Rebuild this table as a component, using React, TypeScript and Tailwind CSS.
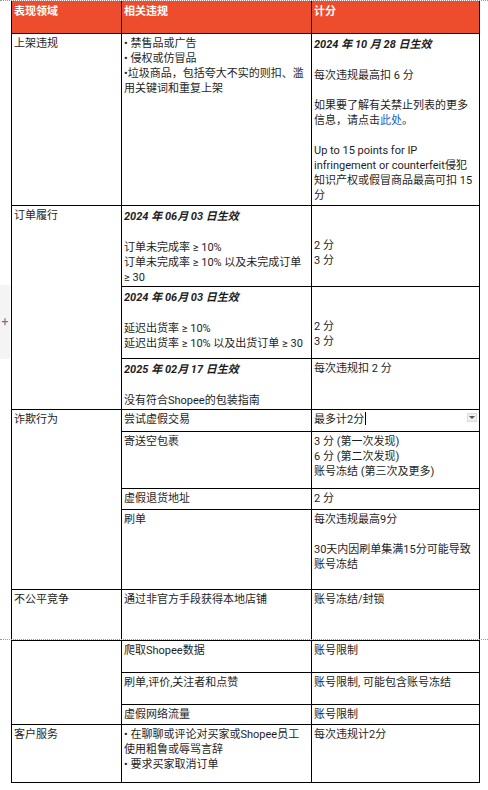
import React from 'react';

const cell = 'border-r border-b border-black px-[2px] pt-[2px] overflow-hidden';
const head = 'border-r border-b border-black bg-[#ee4d2d] px-[2px] pt-[3px] font-bold text-white';

function Dated({ children }: { children: React.ReactNode }) {
	return <div className="whitespace-nowrap font-bold italic leading-[17px]">{children}</div>;
}

function Gap({ h = 'h-[15px]' }: { h?: string }) {
	return <div className={h} />;
}

function Line({ children }: { children: React.ReactNode }) {
	return <div className="whitespace-nowrap">{children}</div>;
}

export default function App() {
	return (
		<div
			className="relative min-h-[790px] w-[488px] bg-white text-[11px] leading-[15px] text-[#1e1e1e]"
			style={{ fontFamily: 'Roboto, "Noto Sans CJK SC", sans-serif' }}
		>
			{/* page margin widget */}
			<div className="absolute left-0 top-[285px] flex h-[74px] w-[10px] items-center justify-center bg-[#f4f4f4] text-[12px] text-gray-500">
				+
			</div>

			<div className="h-px border-t border-dotted border-[#9a9a9a]" />

			<div className="ml-[11px] grid w-[469px] grid-cols-[110px_190px_168px] grid-rows-[33px_172px_81px_72px_51px_22px_57px_21px_80px_49px] border-l border-black">
				<div className={head}>表现领域</div>
				<div className={head}>相关违规</div>
				<div className={head}>计分</div>

				{/* 上架违规 */}
				<div className={cell}>上架违规</div>
				<div className={cell}>
					<Line>• 禁售品或广告</Line>
					<Line>• 侵权或仿冒品</Line>
					<Line>•垃圾商品，包括夸大不实的则扣、滥</Line>
					<Line>用关键词和重复上架</Line>
				</div>
				<div className={cell}>
					<Dated>2024 年 10 月 28 日生效</Dated>
					<Gap />
					<Line>每次违规最高扣 6 分</Line>
					<Gap />
					<Line>如果要了解有关禁止列表的更多</Line>
					<Line>
						信息，请点击<span className="text-[#1d5fcf]">此处</span>。
					</Line>
					<Gap />
					<Line>Up to 15 points for IP</Line>
					<Line>infringement or counterfeit侵犯</Line>
					<Line>知识产权或假冒商品最高可扣 15</Line>
					<Line>分</Line>
				</div>

				{/* 订单履行 */}
				<div className={`${cell} row-span-3`}>订单履行</div>
				<div className={cell}>
					<Dated>2024 年 06月 03 日生效</Dated>
					<Gap />
					<Line>订单未完成率 ≥ 10%</Line>
					<Line>订单未完成率 ≥ 10% 以及未完成订单</Line>
					<Line>≥ 30</Line>
				</div>
				<div className={cell}>
					<Gap h="h-[30px]" />
					<Line>2 分</Line>
					<Line>3 分</Line>
				</div>
				<div className={cell}>
					<Dated>2024 年 06月 03 日生效</Dated>
					<Gap />
					<Line>延迟出货率 ≥ 10%</Line>
					<Line>延迟出货率 ≥ 10% 以及出货订单 ≥ 30</Line>
				</div>
				<div className={cell}>
					<Gap h="h-[30px]" />
					<Line>2 分</Line>
					<Line>3 分</Line>
				</div>
				<div className={cell}>
					<Dated>2025 年 02月 17 日生效</Dated>
					<Gap />
					<Line>没有符合Shopee的包装指南</Line>
				</div>
				<div className={cell}>每次违规扣 2 分</div>

				{/* 诈欺行为 */}
				<div className={`${cell} row-span-4`}>诈欺行为</div>
				<div className={cell}>尝试虚假交易</div>
				<div className={`${cell} relative`}>
					<span>最多计2分</span>
					<span className="ml-px inline-block h-[13px] w-px bg-black align-[-2px]" />
					<div className="absolute right-[2px] top-[3px] flex h-[9px] w-[10px] items-center justify-center border border-[#dcdcdc] bg-[#efefef]">
						<div className="h-0 w-0 border-x-[3px] border-t-[3px] border-x-transparent border-t-[#555]" />
					</div>
				</div>
				<div className={cell}>寄送空包裹</div>
				<div className={cell}>
					<Line>3 分 (第一次发现)</Line>
					<Line>6 分 (第二次发现)</Line>
					<Line>账号冻结 (第三次及更多)</Line>
				</div>
				<div className={cell}>虚假退货地址</div>
				<div className={cell}>2 分</div>
				<div className={cell}>刷单</div>
				<div className={cell}>
					<Line>每次违规最高9分</Line>
					<Gap />
					<Line>30天内因刷单集满15分可能导致</Line>
					<Line>账号冻结</Line>
				</div>

				{/* 不公平竞争 */}
				<div className="border-r border-black px-[2px] pt-[2px]">不公平竞争</div>
				<div className="border-r border-black px-[2px] pt-[2px]">通过非官方手段获得本地店铺</div>
				<div className="border-r border-black px-[2px] pt-[2px]">账号冻结/封锁</div>
			</div>

			<div className="h-px border-t border-dotted border-[#9a9a9a]" />

			<div className="ml-[11px] grid w-[469px] grid-cols-[110px_190px_168px] grid-rows-[32px_32px_20px_58px] border-l border-t border-black">
				<div className={`${cell} row-span-3`} />
				<div className={cell}>爬取Shopee数据</div>
				<div className={cell}>账号限制</div>
				<div className={cell}>刷单,评价,关注者和点赞</div>
				<div className={cell}>账号限制, 可能包含账号冻结</div>
				<div className={cell}>虚假网络流量</div>
				<div className={cell}>账号限制</div>

				<div className={cell}>客户服务</div>
				<div className={cell}>
					<Line>• 在聊聊或评论对买家或Shopee员工</Line>
					<Line>使用粗鲁或辱骂言辞</Line>
					<Line>• 要求买家取消订单</Line>
				</div>
				<div className={cell}>每次违规计2分</div>
			</div>
		</div>
	);
}
